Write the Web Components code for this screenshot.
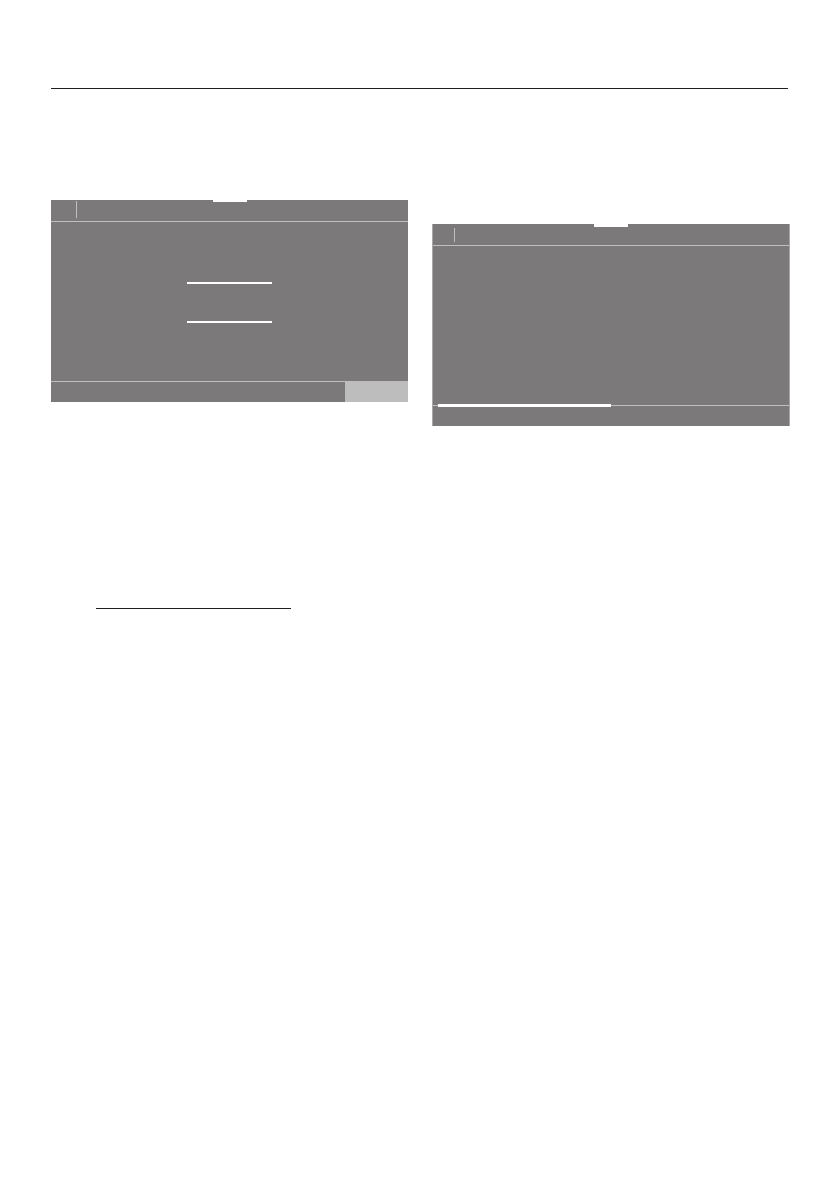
<!DOCTYPE html>
<html lang="en">
<head>
<meta charset="utf-8">
<meta name="viewport" content="width=device-width, initial-scale=1">
<title>Display panels</title>
<style>
    body {
        margin: 0;
        background: #fff;
        font-family: "Liberation Sans", sans-serif;
    }
</style>
</head>
<body>
<manual-page>
    <page-rule slot="header"></page-rule>
    <manual-column slot="left">
        <display-panel>
            <value-fields></value-fields>
            <panel-action slot="footer"></panel-action>
        </display-panel>
        <page-rule class="note"></page-rule>
    </manual-column>
    <manual-column slot="right">
        <display-panel framed>
            <scroll-mark slot="footer"></scroll-mark>
        </display-panel>
    </manual-column>
</manual-page>

<script>
'use strict';

class ManualPage extends HTMLElement {

    constructor() {
        super();

        const shadow = this.attachShadow({mode: 'open'});

        shadow.innerHTML = `
            <style>
                :host {
                    display: block;
                    padding: 88px 49px 48px 51px;
                }
                header {
                    padding-right: 2px;
                }
                main {
                    display: grid;
                    grid-template-columns: minmax(0, 357fr) minmax(0, 358fr);
                    gap: 24px;
                    align-items: start;
                    margin-top: 111px;
                }
                ::slotted([slot="right"]) {
                    padding-top: 24px;
                }
                ::slotted([slot="left"]) {
                    --note-indent: 45px;
                }
            </style>
            <header><slot name="header"></slot></header>
            <main>
                <slot name="left"></slot>
                <slot name="right"></slot>
            </main>
        `;
    }
}

class ManualColumn extends HTMLElement {

    constructor() {
        super();

        const shadow = this.attachShadow({mode: 'open'});

        shadow.innerHTML = `
            <style>
                :host {
                    display: flex;
                    flex-direction: column;
                    gap: 206px;
                }
                ::slotted(.note) {
                    width: 195px;
                    margin-left: var(--note-indent, 0);
                }
            </style>
            <slot></slot>
        `;
    }
}

class PageRule extends HTMLElement {

    constructor() {
        super();

        const shadow = this.attachShadow({mode: 'open'});

        shadow.innerHTML = `
            <style>
                :host {
                    display: block;
                    height: 1px;
                    background: #231f20;
                }
            </style>
        `;
    }
}

class DisplayPanel extends HTMLElement {

    constructor() {
        super();

        const shadow = this.attachShadow({mode: 'open'});

        shadow.innerHTML = `
            <style>
                :host {
                    --line: #bfbfbf;
                    --lead: 25px;
                    --notch: 2px;
                    display: block;
                    box-sizing: border-box;
                    background: #7b7979;
                }
                :host([framed]) {
                    --lead: 21px;
                    --notch: 3px;
                    border: solid #a9a8a8;
                    border-width: 0 1px;
                }
                .top {
                    display: grid;
                    grid-template-columns: 1fr 34px 1fr;
                    height: 21px;
                    border-bottom: 1px solid var(--line);
                }
                .divider {
                    width: 1px;
                    height: 17px;
                    margin: 1px 0 0 var(--lead);
                    background: var(--line);
                }
                :host([framed]) .divider {
                    height: 14px;
                    margin-top: 4px;
                }
                .notch {
                    height: var(--notch);
                    background: #fff;
                }
                .content {
                    min-height: 159px;
                }
                .bottom {
                    position: relative;
                    display: flex;
                    justify-content: flex-end;
                    height: 21px;
                    box-shadow: inset 0 1px var(--line);
                }
            </style>
            <div class="top">
                <div class="divider"></div>
                <div class="notch"></div>
            </div>
            <div class="content"><slot></slot></div>
            <div class="bottom"><slot name="footer"></slot></div>
        `;
    }
}

class ValueFields extends HTMLElement {

    constructor() {
        super();

        const shadow = this.attachShadow({mode: 'open'});

        shadow.innerHTML = `
            <style>
                :host {
                    display: flex;
                    flex-direction: column;
                    align-items: center;
                    gap: 15px;
                    padding-top: 38px;
                }
                input {
                    box-sizing: border-box;
                    width: 85px;
                    height: 24px;
                    margin: 0;
                    padding: 0;
                    border: 0;
                    border-bottom: 2px solid #fff;
                    border-radius: 0;
                    outline: 0;
                    background: none;
                    color: #fff;
                    font: inherit;
                    text-align: center;
                }
            </style>
            <input type="text" aria-label="First value">
            <input type="text" aria-label="Second value">
        `;
    }
}

class PanelAction extends HTMLElement {

    constructor() {
        super();

        const shadow = this.attachShadow({mode: 'open'});

        shadow.innerHTML = `
            <style>
                :host {
                    display: flex;
                    width: 63px;
                }
                button {
                    flex: 1;
                    padding: 0;
                    border: 0;
                    background: #bebdbd;
                }
            </style>
            <button type="button" aria-label="Confirm"></button>
        `;
    }
}

class ScrollMark extends HTMLElement {

    constructor() {
        super();

        const shadow = this.attachShadow({mode: 'open'});

        // the mark straddles the line above the footer
        shadow.innerHTML = `
            <style>
                :host {
                    position: absolute;
                    top: -1px;
                    left: 5px;
                    width: 173px;
                    height: 3px;
                    background: #fff;
                }
            </style>
        `;
    }
}

customElements.define('manual-page', ManualPage);
customElements.define('manual-column', ManualColumn);
customElements.define('page-rule', PageRule);
customElements.define('display-panel', DisplayPanel);
customElements.define('value-fields', ValueFields);
customElements.define('panel-action', PanelAction);
customElements.define('scroll-mark', ScrollMark);
</script>
</body>
</html>
